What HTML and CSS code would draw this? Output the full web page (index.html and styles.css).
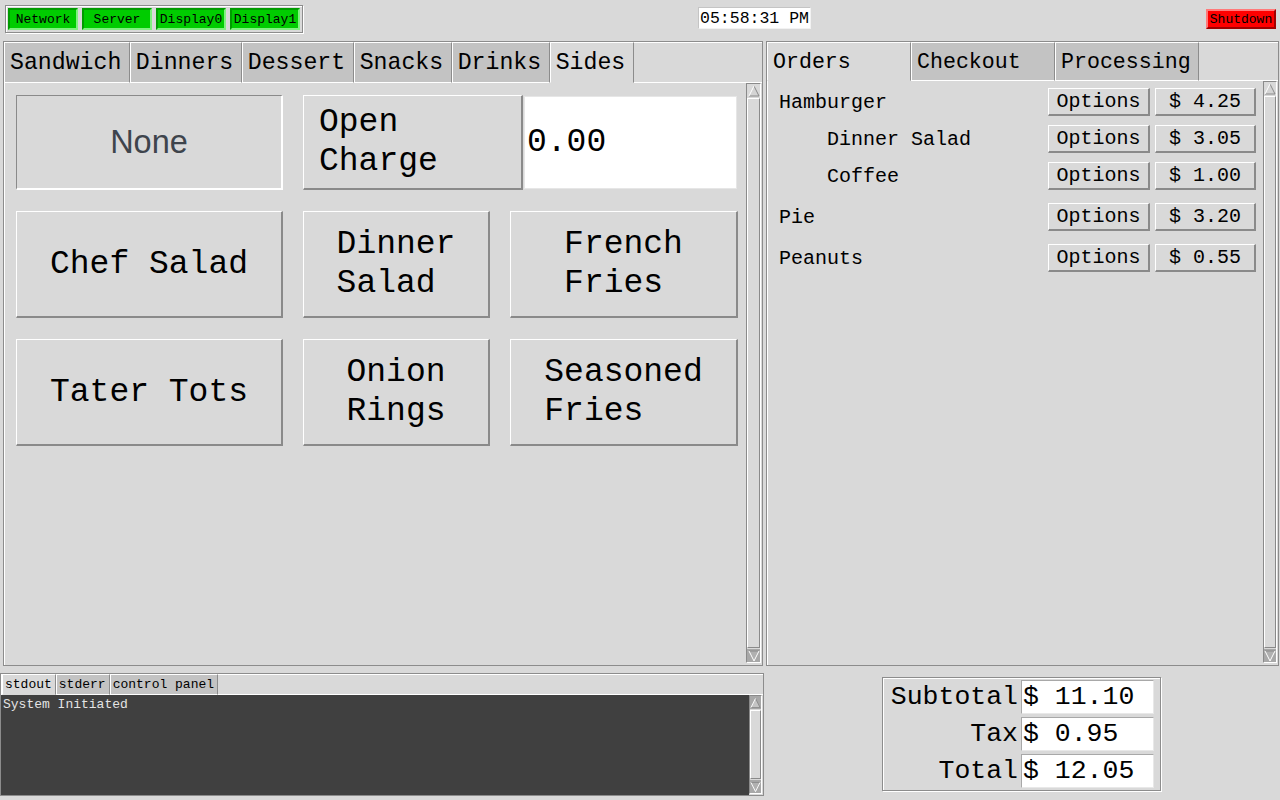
FILE: index.html
```html
<!DOCTYPE html>
<html lang="en">
<head>
<meta charset="utf-8">
<title>POS</title>
<link rel="stylesheet" href="styles.css">
</head>
<body>
<div class="app">
  <header class="topbar">
    <div class="status-group">
      <span class="ind">Network</span>
      <span class="ind">Server</span>
      <span class="ind">Display0</span>
      <span class="ind">Display1</span>
    </div>
    <div class="clock">05:58:31 PM</div>
    <div class="shutdown">Shutdown</div>
  </header>

  <main class="main">
    <section class="panel menu-panel">
      <nav class="tabs big-tabs">
        <div class="tab">Sandwich</div>
        <div class="tab">Dinners</div>
        <div class="tab">Dessert</div>
        <div class="tab">Snacks</div>
        <div class="tab">Drinks</div>
        <div class="tab active">Sides</div>
        <div class="tab-fill"></div>
      </nav>
      <div class="panel-body">
        <div class="menu-grid">
          <div class="btn sunken none-btn">None</div>
          <div class="charge">
            <div class="btn charge-btn"><span>Open<br>Charge</span></div>
            <div class="charge-input">0.00</div>
          </div>
          <div class="btn"><span>Chef Salad</span></div>
          <div class="btn"><span>Dinner<br>Salad</span></div>
          <div class="btn"><span>French<br>Fries</span></div>
          <div class="btn"><span>Tater Tots</span></div>
          <div class="btn"><span>Onion<br>Rings</span></div>
          <div class="btn"><span>Seasoned<br>Fries</span></div>
        </div>
        <div class="vscroll menu-scroll">
          <div class="arrow up"><svg width="12" height="12" viewBox="0 0 12 12"><polygon points="6,1 11,11 1,11" fill="#d4d4d4"/><polyline points="1,11 11,11 6,1" fill="none" stroke="#8a8a8a"/><polyline points="1,11 6,1" fill="none" stroke="#ffffff"/></svg></div>
          <div class="thumb"></div>
          <div class="arrow down"><svg width="12" height="12" viewBox="0 0 12 12"><polygon points="1,1 11,1 6,11" fill="#b0b0b0"/><polyline points="1,1 11,1" fill="none" stroke="#8a8a8a"/><polyline points="1,1 6,11 11,1" fill="none" stroke="#ffffff"/></svg></div>
        </div>
      </div>
    </section>

    <section class="panel order-panel">
      <nav class="tabs order-tabs">
        <div class="tab active">Orders</div>
        <div class="tab">Checkout</div>
        <div class="tab">Processing</div>
        <div class="tab-fill"></div>
      </nav>
      <div class="panel-body">
        <div class="order-list">
          <div class="order-group">
            <div class="order-row"><span class="name">Hamburger</span><span class="obtn opt">Options</span><span class="obtn price">$ 4.25</span></div>
            <div class="order-row sub"><span class="name">Dinner Salad</span><span class="obtn opt">Options</span><span class="obtn price">$ 3.05</span></div>
            <div class="order-row sub"><span class="name">Coffee</span><span class="obtn opt">Options</span><span class="obtn price">$ 1.00</span></div>
          </div>
          <div class="order-group">
            <div class="order-row"><span class="name">Pie</span><span class="obtn opt">Options</span><span class="obtn price">$ 3.20</span></div>
          </div>
          <div class="order-group">
            <div class="order-row"><span class="name">Peanuts</span><span class="obtn opt">Options</span><span class="obtn price">$ 0.55</span></div>
          </div>
        </div>
        <div class="vscroll order-scroll">
          <div class="arrow up"><svg width="12" height="12" viewBox="0 0 12 12"><polygon points="6,1 11,11 1,11" fill="#d4d4d4"/><polyline points="1,11 11,11 6,1" fill="none" stroke="#8a8a8a"/><polyline points="1,11 6,1" fill="none" stroke="#ffffff"/></svg></div>
          <div class="thumb"></div>
          <div class="arrow down"><svg width="12" height="12" viewBox="0 0 12 12"><polygon points="1,1 11,1 6,11" fill="#b0b0b0"/><polyline points="1,1 11,1" fill="none" stroke="#8a8a8a"/><polyline points="1,1 6,11 11,1" fill="none" stroke="#ffffff"/></svg></div>
        </div>
      </div>
    </section>
  </main>

  <footer class="bottom">
    <section class="console">
      <nav class="tabs console-tabs">
        <div class="tab active">stdout</div>
        <div class="tab">stderr</div>
        <div class="tab">control panel</div>
        <div class="tab-fill"></div>
      </nav>
      <div class="console-body">
        <div class="console-out">System Initiated</div>
        <div class="vscroll console-scroll">
          <div class="arrow up dark"><svg width="12" height="12" viewBox="0 0 12 12"><polygon points="6,1 11,11 1,11" fill="#c4c4c4"/><polyline points="1,11 11,11 6,1" fill="none" stroke="#8a8a8a"/><polyline points="1,11 6,1" fill="none" stroke="#ffffff"/></svg></div>
          <div class="thumb"></div>
          <div class="arrow down"><svg width="12" height="12" viewBox="0 0 12 12"><polygon points="1,1 11,1 6,11" fill="#b0b0b0"/><polyline points="1,1 11,1" fill="none" stroke="#8a8a8a"/><polyline points="1,1 6,11 11,1" fill="none" stroke="#ffffff"/></svg></div>
        </div>
      </div>
    </section>
    <section class="totals">
      <span class="tlabel">Subtotal</span><span class="tval">$ 11.10</span>
      <span class="tlabel">Tax</span><span class="tval">$ 0.95</span>
      <span class="tlabel">Total</span><span class="tval">$ 12.05</span>
    </section>
  </footer>
</div>
</body>
</html>
```

FILE: styles.css
```css
* { box-sizing: border-box; }
html, body { margin: 0; height: 100%; }
body {
  background: #d9d9d9;
  font-family: "Liberation Mono", "DejaVu Sans Mono", monospace;
  color: #000;
  overflow: hidden;
}
.app { width: 1280px; height: 800px; display: flex; flex-direction: column; }

/* top bar */
.topbar { height: 41px; flex: none; display: flex; align-items: flex-start; padding: 5px 4px 0 5px; }
.status-group {
  display: flex; gap: 4px; padding: 2px; height: 28px;
  border: 1px solid #8c8c8c;
  box-shadow: inset 1px 1px 0 #fff, 1px 1px 0 #fff;
}
.ind {
  width: 70px; height: 22px; background: #00cc00;
  border: 2px solid; border-color: #009c00 #80f080 #80f080 #009c00;
  font-size: 13px; display: flex; align-items: center; justify-content: center;
}
.clock {
  margin-left: 395px; margin-top: 2px; width: 113px; height: 22px; background: #fff;
  border: 1px solid; border-color: #c4c4c4 #f2f2f2 #f2f2f2 #c4c4c4;
  font-size: 16.5px; display: flex; align-items: center; justify-content: center;
}
.shutdown {
  margin-left: auto; margin-top: 4px; width: 70px; height: 20px; background: #ff0000;
  border: 2px solid; border-color: #ff7a7a #a00000 #a00000 #ff7a7a;
  font-size: 13px; display: flex; align-items: center; justify-content: center;
}

/* panels */
.main { display: flex; gap: 3px; padding-left: 3px; height: 625px; flex: none; }
.panel {
  border: 1px solid #8c8c8c; box-shadow: inset 1px 1px 0 #fff;
  display: flex; flex-direction: column;
}
.menu-panel { width: 760px; }
.order-panel { width: 513px; }

.tabs { display: flex; flex: none; }
.tab {
  border-top: 1px solid #fff; border-left: 1px solid #fff;
  border-right: 1px solid #8c8c8c; border-bottom: 1px solid #fff;
  background: #c3c3c3; display: flex; align-items: center; white-space: nowrap;
}
.tab.active { background: #d9d9d9; border-bottom-color: #d9d9d9; }
.tab-fill { flex: 1; border-bottom: 1px solid #fff; }
.big-tabs { height: 41px; }
.big-tabs .tab { font-size: 23.2px; padding: 0 7.5px 0 5px; }
.order-tabs { height: 39px; }
.order-tabs .tab { width: 144px; font-size: 21.6px; padding-left: 5px; }

.panel-body { flex: 1; display: flex; min-height: 0; }

/* menu buttons */
.menu-grid {
  flex: 1; display: grid;
  grid-template-columns: 267px 187px 228px;
  grid-template-rows: 95px 107px 107px;
  column-gap: 20px; row-gap: 21px;
  padding: 12px 0 0 12px; align-content: start;
}
.btn {
  border-style: solid; border-width: 1px 2px 2px 1px;
  border-color: #fff #8a8a8a #8a8a8a #fff;
  background: #d9d9d9; display: flex; align-items: center; justify-content: center;
  font-size: 33px; line-height: 39px; white-space: nowrap;
}
.btn span { text-align: left; }
.btn.sunken { border-width: 1px 2px 2px 1px; border-color: #8a8a8a #fff #fff #8a8a8a; }
.none-btn { font-family: "Liberation Sans", Arial, sans-serif; font-size: 32.5px; color: #3e444c; }
.charge { grid-column: 2 / span 2; display: flex; }
.charge-btn { width: 220px; justify-content: flex-start; padding-left: 15px; }
.charge-input {
  flex: 1; margin: 1px 1px 1px 1px; background: #fff;
  border: 1px solid #e6e6e6; font-size: 33px;
  display: flex; align-items: center; padding-left: 2px;
}

/* scrollbars */
.vscroll {
  display: flex; flex-direction: column; flex: none;
  border: 1px solid; border-color: #8a8a8a #fff #fff #8a8a8a;
  background: #d9d9d9;
}
.menu-scroll { width: 15px; margin: 0 1px 2px 0; }
.order-scroll { width: 14px; margin: 0 1px 2px 0; }
.console-scroll { width: 13px; margin: 0 1px 1px 0; }
.arrow { height: 13px; flex: none; display: flex; align-items: center; justify-content: center; }
.arrow.down { background: #a8a8a8; }
.arrow.dark { background: #a8a8a8; }
.thumb {
  flex: 1; margin: 1px 0;
  border: 1px solid; border-color: #fff #8a8a8a #8a8a8a #fff;
}

/* orders */
.order-list { flex: 1; padding: 7px 7px 0 12px; display: flex; flex-direction: column; gap: 13px; }
.order-group { display: flex; flex-direction: column; gap: 9px; }
.order-row { display: flex; align-items: center; height: 28px; font-size: 20px; }
.order-row .name { flex: 1; }
.order-row.sub .name { padding-left: 48px; }
.obtn {
  height: 28px; display: flex; align-items: center; justify-content: center;
  border-style: solid; border-width: 1px 2px 2px 1px;
  border-color: #fff #8a8a8a #8a8a8a #fff; background: #d9d9d9;
}
.opt { width: 102px; margin-right: 5px; }
.price { width: 101px; }

/* bottom */
.bottom { display: flex; align-items: flex-start; margin-top: 7px; }
.console {
  width: 764px; height: 123px; border: 1px solid #8c8c8c; box-shadow: inset 1px 1px 0 #fff;
  display: flex; flex-direction: column;
}
.console-tabs { height: 21px; padding-left: 1px; }
.console-tabs .tab { font-size: 13px; padding: 0 3px 0 2px; }
.console-body { flex: 1; display: flex; min-height: 0; }
.console-out {
  flex: 1; background: #404040; color: #e4e4e4; font-size: 13px; line-height: 15px;
  padding: 2px 2px;
}
.totals {
  margin-left: 118px; margin-top: 4px; width: 279px; height: 114px;
  border: 1px solid #8c8c8c; box-shadow: inset 1px 1px 0 #fff, 1px 1px 0 #fff;
  display: grid; grid-template-columns: 1fr 133px; grid-auto-rows: 34px;
  row-gap: 3px; column-gap: 3px; padding: 2px 6px 0 6px; font-size: 26.5px;
}
.tlabel { text-align: right; align-self: center; }
.tval {
  background: #fff; border: 1px solid; border-color: #a8a8a8 #e8e8e8 #e8e8e8 #a8a8a8;
  display: flex; align-items: center; padding-left: 1px;
}
```
